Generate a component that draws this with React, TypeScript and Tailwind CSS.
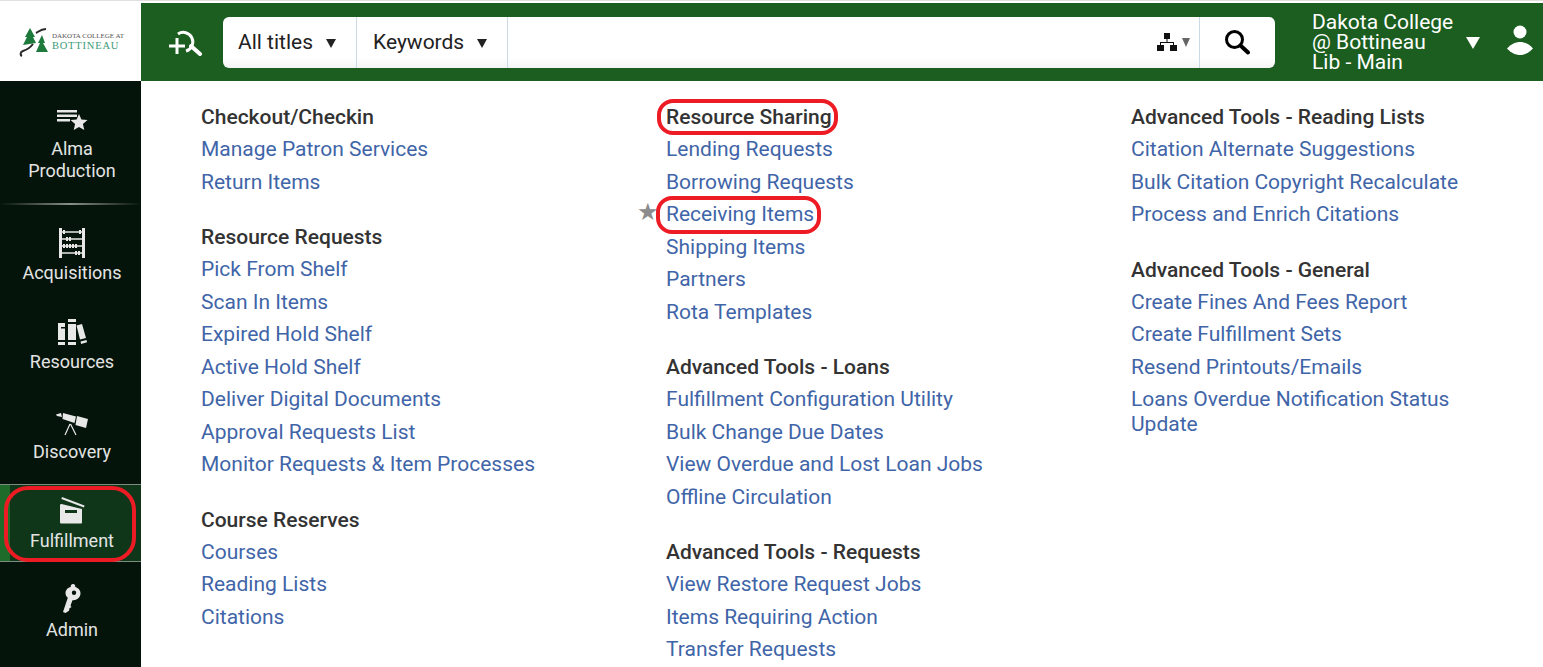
const columns = [
  [
    { title: "Checkout/Checkin", links: ["Manage Patron Services", "Return Items"] },
    { title: "Resource Requests", links: ["Pick From Shelf", "Scan In Items", "Expired Hold Shelf", "Active Hold Shelf", "Deliver Digital Documents", "Approval Requests List", "Monitor Requests & Item Processes"] },
    { title: "Course Reserves", links: ["Courses", "Reading Lists", "Citations"] },
  ],
  [
    { title: "Resource Sharing", links: ["Lending Requests", "Borrowing Requests", "Receiving Items", "Shipping Items", "Partners", "Rota Templates"] },
    { title: "Advanced Tools - Loans", links: ["Fulfillment Configuration Utility", "Bulk Change Due Dates", "View Overdue and Lost Loan Jobs", "Offline Circulation"] },
    { title: "Advanced Tools - Requests", links: ["View Restore Request Jobs", "Items Requiring Action", "Transfer Requests"] },
  ],
  [
    { title: "Advanced Tools - Reading Lists", links: ["Citation Alternate Suggestions", "Bulk Citation Copyright Recalculate", "Process and Enrich Citations"] },
    { title: "Advanced Tools - General", links: ["Create Fines And Fees Report", "Create Fulfillment Sets", "Resend Printouts/Emails", "Loans Overdue Notification Status Update"] },
  ],
]

function StarListIcon() {
  return (
    <svg width="32" height="22" viewBox="0 0 32 22" fill="#e8e8e8">
      <rect x="1" y="1" width="20" height="2.500" />
      <rect x="1" y="5.500" width="20" height="2.500" />
      <rect x="1" y="10" width="13" height="2.500" />
      <path d="M23 5l2.400 5.600 6.100.5-4.600 4 1.400 6-5.300-3.200-5.300 3.200 1.400-6-4.600-4 6.100-.5z" />
    </svg>
  )
}

function AbacusIcon() {
  return (
    <svg width="28" height="30" viewBox="0 0 28 30" fill="none" stroke="#e8e8e8">
      <path d="M2.500 0v30M25.500 0v30" strokeWidth="3" />
      <path d="M2 4h24M2 11h24M2 18h24M2 25h24" strokeWidth="1.500" />
      <path d="M6 2v4M9 9v4M12 9v4M6 16v4M9 16v4M12 16v4M15 16v4M18 16v4M18 23v4M21 23v4M22 2v4" strokeWidth="2" />
    </svg>
  )
}

function BooksIcon() {
  return (
    <svg width="30" height="27" viewBox="0 0 30 27" fill="#e8e8e8">
      <path d="M1 4h7v4H4v1.500h4V21H1z" />
      <rect x="1" y="23" width="7" height="3" />
      <rect x="11" y="0" width="8" height="3" />
      <rect x="11" y="5" width="8" height="16" />
      <rect x="11" y="23" width="8" height="3" />
      <path d="M19.500 6.500l5.500-1.500 4 14-6 1.500zM23.500 22.500l6-1.600.6 2.400-6 1.700z" />
    </svg>
  )
}

function TelescopeIcon() {
  return (
    <svg width="34" height="24" viewBox="0 0 34 24" fill="#e8e8e8">
      <path d="M1 2.500l5-1.500 1 4-5-1z" />
      <path d="M8 1l13 3.500-1.500 6.500-12-4z" />
      <path d="M22 4l11 3-2 9-10.500-3z" />
      <path d="M15 12l-5 11M15.500 12l5.500 11" stroke="#e8e8e8" strokeWidth="1.200" fill="none" />
    </svg>
  )
}

function BoxIcon() {
  return (
    <svg width="26" height="28" viewBox="0 0 26 28" fill="#e8e8e8">
      <path d="M3 0l22.500 8.500-.6 2L2.400 2z" />
      <path d="M1 8.500c0-1 .5-1.500 1.500-1.500L23 12v13.500c0 .8-.5 1-1 1H2.500C1.500 26.500 1 26 1 25zM6 13v3h12v-3z" fillRule="evenodd" />
    </svg>
  )
}

function KeyIcon() {
  return (
    <svg width="18" height="29" viewBox="0 0 18 29" fill="#e8e8e8">
      <path d="M10 0a2.200 2.200 0 0 1 2.100 3c3.200.8 5.400 3.200 5.400 6.200 0 4-3.300 7-7.300 7h-.7L7.500 21.500l1 1.500-2 1.200-.5 2.500L2.500 29 0 28l4.800-14.200C3.200 12.500 2.500 10.800 2.500 9c0-3 2.400-5.400 5.400-6A2.200 2.200 0 0 1 10 0zm1 6.500a2.200 2.200 0 1 0 0 4.400 2.200 2.200 0 0 0 0-4.400z" fillRule="evenodd" />
    </svg>
  )
}

const navItems = [
  { label: "Acquisitions", icon: <AbacusIcon />, box: "h-[90px] pt-[23px] gap-[3.500px]" },
  { label: "Resources", icon: <BooksIcon />, box: "h-[90px] pt-[22px] gap-[4px]" },
  { label: "Discovery", icon: <TelescopeIcon />, box: "h-[99px] pt-[24px] gap-[2px]" },
]

function NavLabel({ children }: { children: React.ReactNode }) {
  return <span className="text-center text-[18px] leading-[22px] text-[#e4e4e4]">{children}</span>
}

function Sidebar() {
  return (
    <div className="relative flex h-[586px] w-[141px] shrink-0 flex-col bg-[#05140a]">
      <div className="relative flex h-[124px] flex-col items-center pl-[3px] pt-[28px]">
        <StarListIcon />
        <div className="mt-[7px] flex flex-col items-center">
          <NavLabel>Alma</NavLabel>
          <NavLabel>Production</NavLabel>
        </div>
        <div className="absolute bottom-0 left-0 h-[2px] w-full bg-gradient-to-r from-transparent via-[#8a8f8a] to-transparent" />
      </div>
      {navItems.map((item) => (
        <div key={item.label} className={`flex flex-col items-center pl-[3px] ${item.box}`}>
          <div className="flex h-[30px] items-center">{item.icon}</div>
          <NavLabel>{item.label}</NavLabel>
        </div>
      ))}
      <div className="relative flex h-[78px] flex-col items-center border-y border-[#7d8c80] bg-[#10361a] pl-[3px] pt-[12px]">
        <div className="absolute left-0 top-0 h-full w-[10px] bg-[#1f6b2a]" />
        <div className="relative flex flex-col items-center gap-[5px]">
          <BoxIcon />
          <NavLabel>Fulfillment</NavLabel>
        </div>
        <div className="absolute left-[4px] top-[1px] h-[76px] w-[132px] rounded-[24px] border-4 border-[#ed1c24]" />
      </div>
      <div className="flex flex-col items-center gap-[6px] pl-[3px] pt-[22px]">
        <KeyIcon />
        <NavLabel>Admin</NavLabel>
      </div>
    </div>
  )
}

function Logo() {
  return (
    <div className="flex h-[78px] w-[141px] shrink-0 items-center justify-center gap-[1px] bg-white pl-[2px]">
      <svg width="32" height="30" viewBox="0 0 32 30">
        <path d="M11 1l5 9-2 0 3 6-13 2 4-8-2 0z" fill="#1e7a3c" />
        <path d="M23 8l3 8-2 0 5 9-12 0 4-9-2 0z" fill="#1e7a3c" />
        <path d="M27 2c-5 0-8 3-10 4M14 17c-3 4-7 6-10 7-3 1-3 4-1 5" fill="none" stroke="#2a2a2a" strokeWidth="2" />
      </svg>
      <div className="flex flex-col font-['Liberation_Serif',serif] leading-none">
        <span className="whitespace-nowrap text-[7px] text-[#555]">DAKOTA COLLEGE AT</span>
        <span className="mt-[1px] whitespace-nowrap text-[10.500px] tracking-[0.800px] text-[#3a9a78]">BOTTINEAU</span>
      </div>
    </div>
  )
}

function SearchBar() {
  return (
    <div className="flex h-[51px] w-[1052px] items-stretch rounded-[6px] bg-gradient-to-b from-white from-80% to-[#f4f4f4] text-[21px] text-[#222]">
      <div className="flex w-[134px] items-center gap-[13px] border-r border-[#c9d9e6] pl-[15px] pt-[2px]">
        <span>All titles</span>
        <svg width="10" height="9" viewBox="0 0 10 9"><path d="M0 0h10L5 9z" fill="#222" /></svg>
      </div>
      <div className="flex w-[151px] items-center gap-[13px] border-r border-[#c9d9e6] pl-[16px] pt-[2px]">
        <span>Keywords</span>
        <svg width="10" height="9" viewBox="0 0 10 9"><path d="M0 0h10L5 9z" fill="#222" /></svg>
      </div>
      <div className="flex flex-1 items-center justify-end gap-[5px] border-r border-[#c9d9e6] pr-[9px]">
        <svg width="20" height="20" viewBox="0 0 20 20" fill="#111">
          <rect x="7" y="1" width="6" height="6" />
          <rect x="0" y="13" width="7" height="6" />
          <rect x="13" y="13" width="7" height="6" />
          <path d="M9.500 7h1v3H17v3h-1v-2H4v2H3v-3h6.500z" />
        </svg>
        <svg width="8" height="9" viewBox="0 0 8 9"><path d="M0 0h8L4 9z" fill="#666" /></svg>
      </div>
      <div className="flex w-[75px] items-center justify-center pr-[2px]">
        <svg width="26" height="26" viewBox="0 0 26 26" fill="none" stroke="#000">
          <circle cx="10.500" cy="10.500" r="8" strokeWidth="3" />
          <path d="M16.500 16.500l7.500 7" strokeWidth="4" strokeLinecap="round" />
        </svg>
      </div>
    </div>
  )
}

function Header() {
  return (
    <div className="flex h-[78px] flex-1 items-center bg-[#1b5e20] pl-[28px]">
      <svg width="34" height="28" viewBox="0 0 34 28" fill="none" stroke="#fff" className="mr-[20px] shrink-0">
        <path d="M0 18h16M8 10v16" strokeWidth="3" />
        <path d="M9 6A9.500 9.500 0 1 1 17 23" strokeWidth="3" />
        <path d="M22 18l9 8" strokeWidth="4" strokeLinecap="round" />
      </svg>
      <SearchBar />
      <div className="ml-[37px] w-[150px] text-[21px] leading-[20px] text-white">
        <div>Dakota College</div>
        <div>@ Bottineau</div>
        <div>Lib - Main</div>
      </div>
      <svg width="14" height="12" viewBox="0 0 14 12" className="ml-[4px] mt-[2px] shrink-0"><path d="M0 0h14L7 12z" fill="#fff" /></svg>
      <svg width="26" height="30" viewBox="0 0 26 30" fill="#fff" className="mb-[4px] ml-[27px] shrink-0">
        <circle cx="13" cy="7" r="6.500" />
        <path d="M0 23.500C4 19 9 17 13 17s9 2 13 6.500C22 28 17 30 13 30S4 28 0 23.500z" />
      </svg>
    </div>
  )
}

function MenuColumn({ groups }: { groups: { title: string; links: string[] }[] }) {
  return (
    <div className="flex w-[465px] shrink-0 flex-col gap-[30.500px]">
      {groups.map((group) => (
        <div key={group.title} className="flex flex-col gap-[7.500px]">
          <div className="relative -mb-[0.500px] text-[21px] font-medium leading-[25px] text-[#333]">
            {group.title}
            {group.title === "Resource Sharing" && (
              <div className="absolute -left-[9px] -top-[6px] h-[36px] w-[181px] rounded-[16px] border-4 border-[#ed1c24]" />
            )}
          </div>
          {group.links.map((link) => (
            <div key={link} className="relative pr-[90px] text-[21px] leading-[25px] text-[#3f65a8]">
              {link}
              {link === "Receiving Items" && (
                <>
                  <span className="absolute -left-[29px] -top-[2px] text-[24px] leading-[24px] text-[#8c8c8c]">★</span>
                  <div className="absolute -left-[10px] -top-[6px] h-[38px] w-[165px] rounded-[16px] border-4 border-[#ed1c24]" />
                </>
              )}
            </div>
          ))}
        </div>
      ))}
    </div>
  )
}

export default function App() {
  return (
    <div className="h-[667px] w-[1543px] overflow-hidden bg-white font-['Roboto',sans-serif]">
      <div className="h-[3px] border-t border-[#e0e0e0]" />
      <div className="flex">
        <Logo />
        <Header />
      </div>
      <div className="flex">
        <Sidebar />
        <div className="flex h-[586px] overflow-hidden pl-[60px] pt-[24px]">
          {columns.map((groups, i) => (
            <MenuColumn key={i} groups={groups} />
          ))}
        </div>
      </div>
    </div>
  )
}
